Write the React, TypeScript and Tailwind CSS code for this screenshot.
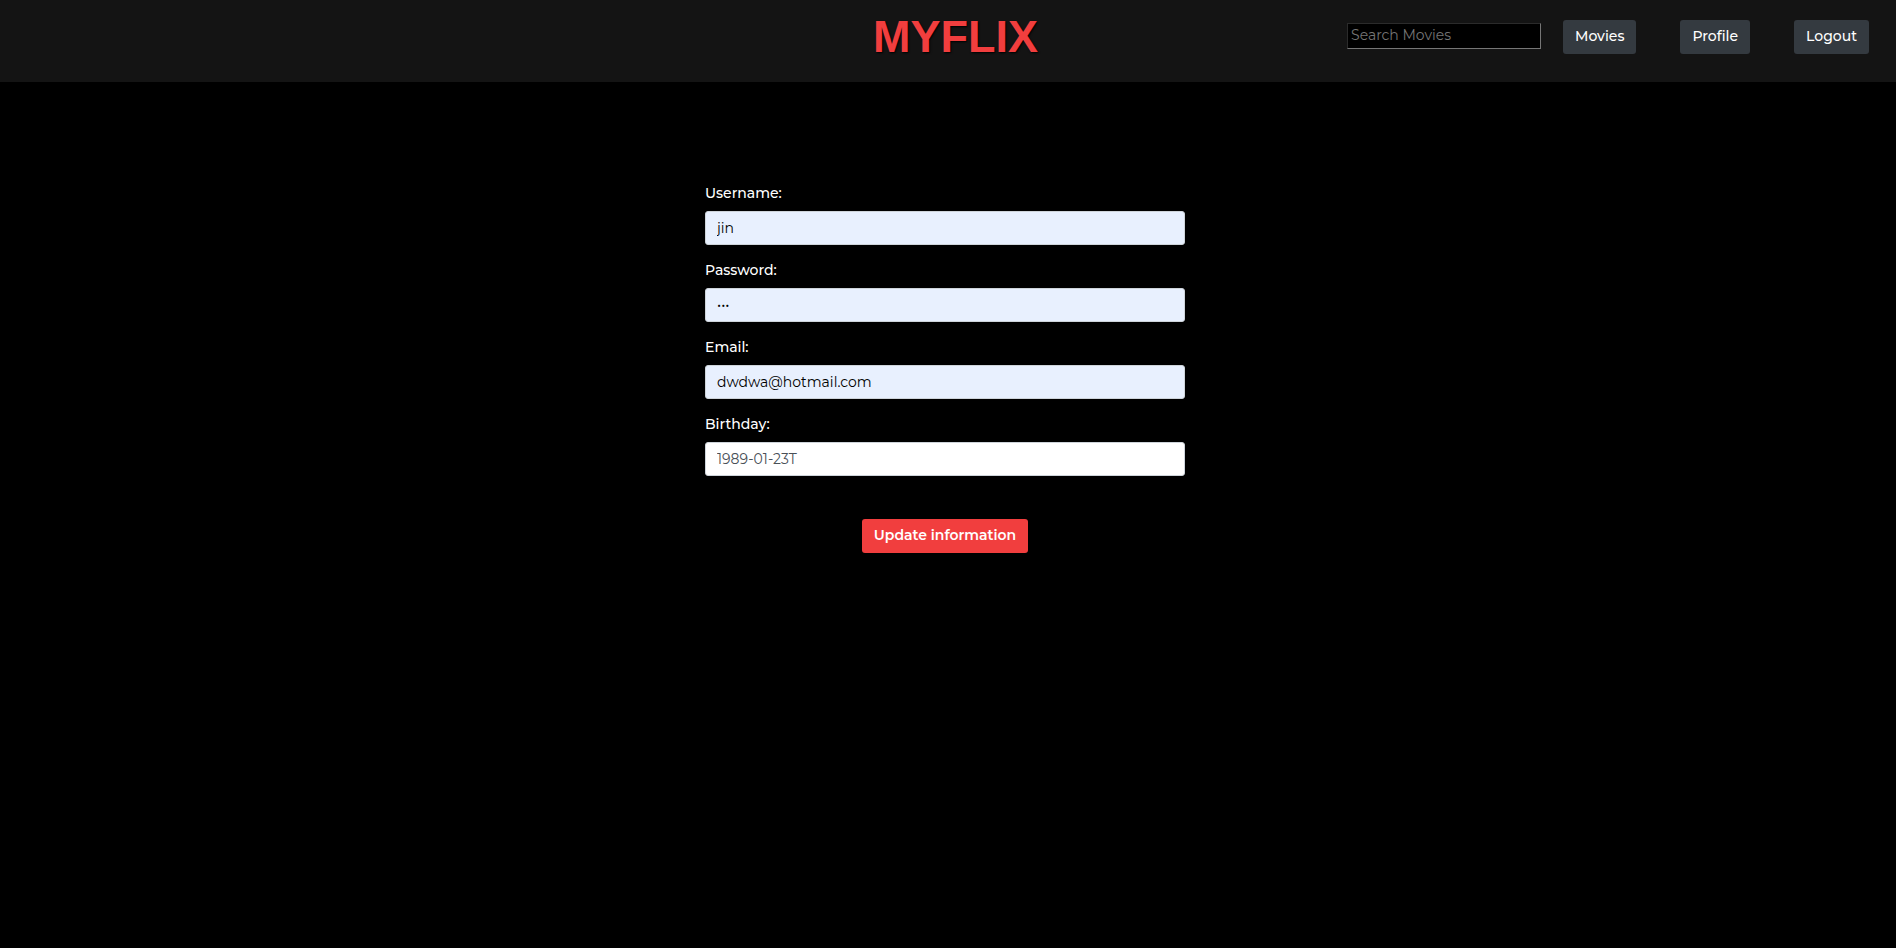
import React from "react";

const navButton =
  "flex h-[34px] items-center rounded-[3px] bg-[#343a40] px-3 pb-[2px] text-[14px] leading-[22px] font-medium text-white hover:bg-[#23272b]";

type FieldProps = {
  id: string;
  label: string;
  type: string;
  value?: string;
  placeholder?: string;
  tone: string;
};

function Field({ id, label, type, value, placeholder, tone }: FieldProps) {
  return (
    <div className="flex flex-col gap-[7px]">
      <label htmlFor={id} className="text-[14px] leading-[22px] font-medium text-white">
        {label}
      </label>
      <input
        id={id}
        type={type}
        defaultValue={value}
        placeholder={placeholder}
        className={`h-[34px] w-full rounded-[3px] border border-[#ced4da] px-[11px] text-[14px] text-black outline-none placeholder:text-[#495057] placeholder:opacity-100 ${tone}`}
      />
    </div>
  );
}

export default function App() {
  return (
    <div className="min-h-screen bg-black font-['Montserrat',Inter,sans-serif]">
      <header className="grid h-[82px] grid-cols-[1fr_auto_1fr] items-start bg-[#141414] pt-5 pr-[27px] pl-[42px]">
        <a
          href="#"
          className="col-start-2 font-['Liberation_Sans',Arial,sans-serif] text-[45px] leading-[34px] font-bold text-[#f13e3e] [text-shadow:1px_1px_2px_black]"
        >
          MYFLIX
        </a>
        <nav className="flex items-start justify-end">
          <input
            type="search"
            aria-label="Search Movies"
            placeholder="Search Movies"
            className="mt-[3px] mr-[22px] h-[26px] w-[194px] appearance-none border border-t-[#2b2b2b] border-r-[#767676] border-b-[#767676] border-l-[#2b2b2b] bg-black px-[3px] pb-[2px] text-[14px] text-white outline-none placeholder:text-[#757575] placeholder:opacity-100"
          />
          <div className="flex gap-[44px]">
            <button type="button" className={navButton}>Movies</button>
            <button type="button" className={navButton}>Profile</button>
            <button type="button" className={navButton}>Logout</button>
          </div>
        </nav>
      </header>

      <main className="pt-[100px] pr-[6px]">
        <form className="mx-auto flex max-w-[480px] flex-col gap-[14px]" onSubmit={(e) => e.preventDefault()}>
          <Field id="username" label="Username:" type="text" value="jin" tone="bg-[#e8f0fe]" />
          <Field id="password" label="Password:" type="password" value="jin" tone="bg-[#e8f0fe]" />
          <Field id="email" label="Email:" type="email" value="dwdwa@hotmail.com" tone="bg-[#e8f0fe]" />
          <Field id="birthday" label="Birthday:" type="text" placeholder="1989-01-23T" tone="bg-white" />
          <button
            type="submit"
            className="mt-[29px] h-[34px] self-center rounded-[3px] bg-[#f13e3e] px-3 pb-[2px] text-[14px] leading-[22px] font-semibold text-white"
          >
            Update information
          </button>
        </form>
      </main>
    </div>
  );
}
